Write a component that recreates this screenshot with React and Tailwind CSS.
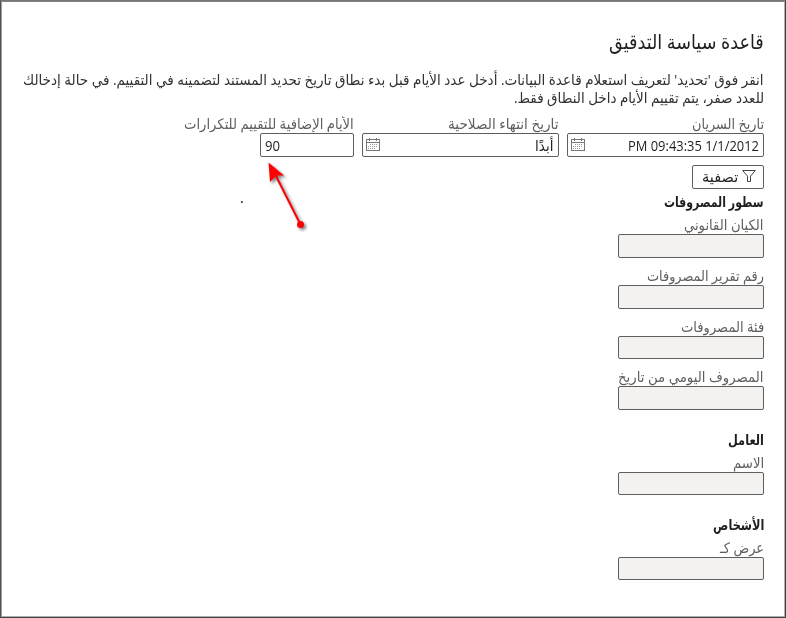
import { useLayoutEffect, useRef } from "react";

// Single line of text, fitted horizontally to the given width.
function Line({ w, className = "", children }) {
  const ref = useRef(null);
  useLayoutEffect(() => {
    const el = ref.current;
    const fit = () => {
      const natural = el.offsetWidth;
      el.style.transform = `scaleX(${w / natural})`;
      el.style.marginInlineEnd = `${w - natural}px`;
    };
    el.style.marginInlineEnd = "0px";
    fit();
  }, [w]);
  return (
    <span ref={ref} className={`block w-max shrink-0 origin-right whitespace-nowrap ${className}`}>
      {children}
    </span>
  );
}

function Label({ w, children }) {
  return (
    <div className="h-[17px] overflow-x-visible overflow-y-clip text-[14.5px] leading-[15px] text-[#605e5c]">
      <Line w={w}>{children}</Line>
    </div>
  );
}

function Calendar() {
  return (
    <svg className="mt-[-1px] h-[14px] w-[14px] shrink-0" viewBox="0 0 14 14" fill="none" stroke="#777" shapeRendering="crispEdges">
      <path d="M0.5 1.500h13v11h-13zM0 4.500h14M3.500 0v3M10.500 0v3" />
      <path d="M4 6.500h8M2 8.500h9M2 10.500h7" stroke="#999" strokeDasharray="1 1" />
    </svg>
  );
}

const box = "flex items-center rounded-[2px] border border-[#605e5c]";

function Field({ label, w, className = "", boxClass = "h-6" }) {
  return (
    <div className={className}>
      <Label w={w}>{label}</Label>
      <div className={`${box} w-[146px] bg-[#f3f2f1] ${boxClass}`} />
    </div>
  );
}

export default function App() {
  return (
    <div
      dir="rtl"
      className="relative h-[618px] w-[786px] overflow-hidden border border-t-[#777] border-r-[#404040] border-b-[#404040] border-l-[#505050] bg-white font-['Open_Sans','DejaVu_Sans',sans-serif] text-[#323130]"
    >
      <div className="h-[616px] border border-t-[#808080] border-r-[#b0b0b0] border-b-[#b0b0b0] border-l-[#a0a0a0] pr-5">
        <h1 className="mt-7 h-6 text-[20px] leading-6 text-[#201f1e]">
          <Line w={155}>قاعدة سياسة التدقيق</Line>
        </h1>
        <p className="mt-[17px] text-[14.5px] leading-[18px]">
          <Line w={741}>
            انقر فوق 'تحديد' لتعريف استعلام قاعدة البيانات. أدخل عدد الأيام قبل بدء نطاق تاريخ تحديد المستند لتضمينه في التقييم. في حالة إدخالك
          </Line>
          <Line w={250}>للعدد صفر، يتم تقييم الأيام داخل النطاق فقط.</Line>
        </p>

        <div className="mt-[9px] flex gap-2">
          <div className="w-[197px]">
            <Label w={72}>تاريخ السريان</Label>
            <div className={`${box} h-6 justify-between pr-1 pl-[3px] text-[14px] text-[#201f1e]`}>
              <Line w={131}>PM 09:43:35 1/1/2012</Line>
              <Calendar />
            </div>
          </div>
          <div className="w-[197px]">
            <Label w={111}>تاريخ انتهاء الصلاحية</Label>
            <div className={`${box} h-6 justify-between pr-[5px] pl-[3px] text-[15px] text-[#201f1e]`}>
              <Line w={18}>أبدًا</Line>
              <Calendar />
            </div>
          </div>
          <div className="w-[94px]">
            <Label w={170}>الأيام الإضافية للتقييم للتكرارات</Label>
            <div className={`${box} h-6 justify-end pl-1 text-[14px] text-[#201f1e]`}>
              <Line w={15}>90</Line>
            </div>
          </div>
        </div>

        <button className={`${box} mt-2 h-6 w-[72px] gap-1 pr-[7px] pb-[2px] text-[15px] text-[#201f1e]`}>
          <svg className="h-[14px] w-[14px] shrink-0" viewBox="0 0 14 14" fill="none" stroke="#444">
            <path d="M0.700 1.500h12.600L8.500 7.200v5.300h-3V7.200z" />
          </svg>
          <Line w={36}>تصفية</Line>
        </button>

        <h2 className="mt-1 h-[18px] text-[14.5px] leading-[18px] font-bold text-[#201f1e]">
          <Line w={100}>سطور المصروفات</Line>
        </h2>
        <Field className="mt-[6px]" label="الكيان القانوني" w={80} />
        <Field className="mt-[10px]" label="رقم تقرير المصروفات" w={117} />
        <Field className="mt-[10px]" label="فئة المصروفات" w={83} boxClass="h-[23px]" />
        <Field className="mt-[10px]" label="المصروف اليومي من تاريخ" w={146} />
        <h2 className="mt-[21px] h-[18px] text-[14.5px] leading-[18px] font-bold text-[#201f1e]">
          <Line w={36}>العامل</Line>
        </h2>
        <Field className="mt-[6px]" label="الاسم" w={31} boxClass="h-[23px]" />
        <h2 className="mt-[21px] h-[18px] text-[14.5px] leading-[18px] font-bold text-[#201f1e]">
          <Line w={51}>الأشخاص</Line>
        </h2>
        <Field className="mt-[6px]" label="عرض كـ" w={44} boxClass="h-[23px]" />
      </div>

      <span className="absolute top-[186px] left-[239px] text-[14px] text-black">.</span>
      <svg className="absolute top-[154px] left-[254px] h-[90px] w-[70px] overflow-visible" viewBox="255 155 70 90">
        <g style={{ filter: "drop-shadow(2px 2px 1.5px rgb(0 0 0 / 0.5))" }}>
          <path d="M274 172L300.500 224.500" stroke="#f00" strokeWidth="2" />
          <path d="M268.500 162.500L284 175.500L276.500 175.500L270 182Z" fill="#f00" />
          <circle cx="300.500" cy="224.500" r="3.500" fill="#f00" />
        </g>
      </svg>
    </div>
  );
}
